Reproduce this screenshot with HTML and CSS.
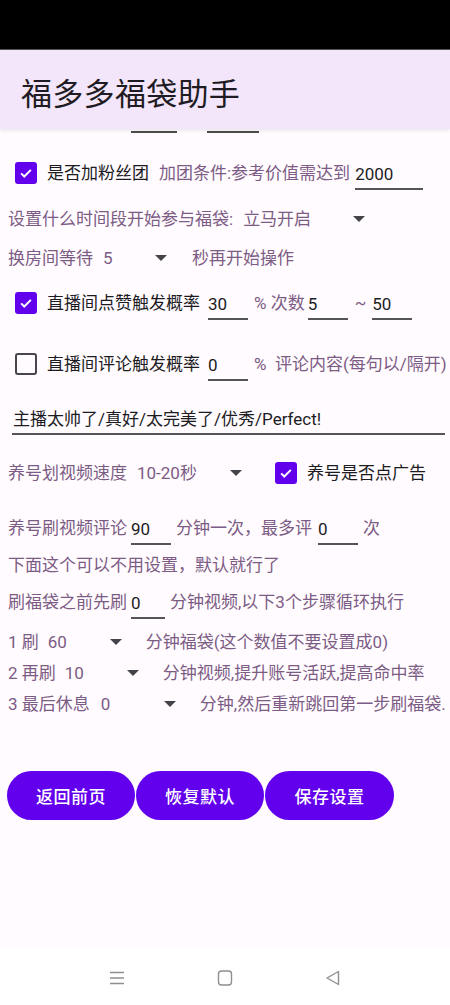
FILE: index.html
```html
<!DOCTYPE html>
<html lang="zh-CN">
<head>
    <meta charset="UTF-8">
    <meta name="viewport" content="width=device-width, initial-scale=1.0">
    <title>福多多福袋助手</title>
    <link rel="stylesheet" href="styles.css">
</head>
<body>
    <div class="status-bar"></div>

    <div class="app-bar">
        <h1 class="title">福多多福袋助手</h1>
    </div>

    <div class="content">
        <!-- 上面被滚动遮住的两个输入框 -->
        <div class="clip-row">
            <span class="clip-line first"></span>
            <span class="clip-line second"></span>
        </div>

        <div class="row r1 pad-check">
            <span class="check on"><svg viewBox="0 0 24 24"><path d="M5.5 12.5l4.2 4.2 8.8-8.8" /></svg></span>
            <span class="label dark">是否加粉丝团</span>
            <span class="label ml10">加团条件:参考价值需达到</span>
            <span class="field w68 ml5">2000</span>
        </div>

        <div class="row r2">
            <span class="label">设置什么时间段开始参与福袋:</span>
            <span class="spinner sp-time"><span>立马开启</span><i class="arrow"></i></span>
        </div>

        <div class="row r3">
            <span class="label">换房间等待</span>
            <span class="spinner sp-wait"><span>5</span><i class="arrow"></i></span>
            <span class="label ml25">秒再开始操作</span>
        </div>

        <div class="row r4 pad-check">
            <span class="check on"><svg viewBox="0 0 24 24"><path d="M5.5 12.5l4.2 4.2 8.8-8.8" /></svg></span>
            <span class="label dark">直播间点赞触发概率</span>
            <span class="field w40 ml8">30</span>
            <span class="label ml6">% 次数</span>
            <span class="field w40 ml3">5</span>
            <span class="label ml7">~</span>
            <span class="field w40 ml6">50</span>
        </div>

        <div class="row r5 pad-check">
            <span class="check"></span>
            <span class="label dark">直播间评论触发概率</span>
            <span class="field w40 ml8">0</span>
            <span class="label ml6 nowrap">%&nbsp;&nbsp;评论内容(每句以/隔开)</span>
        </div>

        <div class="row r6">
            <span class="field wide">主播太帅了/真好/太完美了/优秀/Perfect!</span>
        </div>

        <div class="row r7">
            <span class="label">养号划视频速度</span>
            <span class="spinner sp-speed"><span>10-20秒</span><i class="arrow"></i></span>
            <span class="check on ml33"><svg viewBox="0 0 24 24"><path d="M5.5 12.5l4.2 4.2 8.8-8.8" /></svg></span>
            <span class="label dark">养号是否点广告</span>
        </div>

        <div class="row r8">
            <span class="label">养号刷视频评论</span>
            <span class="field w40 ml4">90</span>
            <span class="label ml5">分钟一次，最多评</span>
            <span class="field w40 ml6">0</span>
            <span class="label ml5">次</span>
        </div>

        <div class="row r9">
            <span class="label">下面这个可以不用设置，默认就行了</span>
        </div>

        <div class="row r10">
            <span class="label">刷福袋之前先刷</span>
            <span class="field w34 ml4">0</span>
            <span class="label ml5">分钟视频,以下3个步骤循环执行</span>
        </div>

        <div class="row step r11">
            <span class="label">1 刷</span>
            <span class="spinner sp-s1"><span>60</span><i class="arrow"></i></span>
            <span class="label ml24">分钟福袋(这个数值不要设置成0)</span>
        </div>

        <div class="row step">
            <span class="label">2 再刷</span>
            <span class="spinner sp-s2"><span>10</span><i class="arrow"></i></span>
            <span class="label ml24">分钟视频,提升账号活跃,提高命中率</span>
        </div>

        <div class="row step">
            <span class="label">3 最后休息</span>
            <span class="spinner sp-s3"><span>0</span><i class="arrow"></i></span>
            <span class="label ml24 nowrap">分钟,然后重新跳回第一步刷福袋.</span>
        </div>

        <div class="buttons">
            <button class="btn b1">返回前页</button>
            <button class="btn b2">恢复默认</button>
            <button class="btn b3">保存设置</button>
        </div>
    </div>

    <div class="nav-bar">
        <svg class="nav-icon" viewBox="0 0 18 18"><path d="M2 3.5h14M2 9h14M2 14.5h14" /></svg>
        <svg class="nav-icon" viewBox="0 0 18 18"><rect x="2.5" y="2" width="13" height="14" rx="3" /></svg>
        <svg class="nav-icon" viewBox="0 0 18 18"><path d="M14.5 2.5v13L3 9z" stroke-linejoin="round" /></svg>
    </div>
</body>
</html>
```

FILE: styles.css
```css
body {
    margin: 0;
    padding: 0;
    width: 450px;
    height: 1005px;
    background-color: #ffffff;
    font-family: Roboto, "Noto Sans CJK SC", sans-serif;
    overflow: hidden;
}
.status-bar {
    height: 49px;
    background-color: #000;
    border-bottom: 1px solid #555;
}
.app-bar {
    height: 79px;
    background-color: #f3e6fb;
    display: flex;
    align-items: center;
    padding-left: 21px;
    position: relative;
    z-index: 1;
    box-shadow: 0 2px 3px rgba(0, 0, 0, 0.08);
}
.title {
    margin: 0;
    font-family: "Noto Sans CJK SC", sans-serif;
    font-weight: 400;
    font-size: 31px;
    color: #1f1b22;
    letter-spacing: 0.3px;
    padding-top: 3px;
}
.content {
    height: 821px;
    background-color: #fffbfe;
    display: flex;
    flex-direction: column;
}
.clip-row {
    height: 4px;
    display: flex;
    align-items: flex-start;
    padding-left: 131px;
}
.clip-line {
    display: block;
    height: 2px;
    margin-top: 2px;
    background-color: #4d4d4d;
}
.clip-line.first { width: 46px; }
.clip-line.second { width: 52px; margin-left: 30px; }

/* 每一行 */
.row {
    display: flex;
    align-items: center;
    height: 36px;
    padding-left: 8px;
    white-space: nowrap;
}
.pad-check { padding-left: 15px; }
.r1 { margin-top: 22px; }
.r2 { margin-top: 10px; }
.r3 { margin-top: 3px; }
.r4 { margin-top: 9px; }
.r5 { margin-top: 25px; }
.r6 { margin-top: 18px; padding-left: 12px; padding-right: 5px; }
.r7 { margin-top: 19px; }
.r8 { margin-top: 19px; }
.r9 { margin-top: 1px; }
.r10 { margin-top: 1px; }
.step { height: 31px; }
.r11 { margin-top: 6px; }

.label {
    font-size: 17px;
    line-height: 20px;
    color: #7c5b85;
}
.label.dark {
    color: #1c1b1f;
    margin-left: 10px;
}
.nowrap { white-space: nowrap; }

.ml3 { margin-left: 3px; }
.ml4 { margin-left: 4px; }
.ml5 { margin-left: 5px; }
.ml6 { margin-left: 6px; }
.ml7 { margin-left: 7px; }
.ml8 { margin-left: 8px; }
.ml10 { margin-left: 10px; }
.ml24 { margin-left: 24px; }
.ml25 { margin-left: 25px; }
.ml33 { margin-left: 33px; }

/* 复选框 */
.check {
    width: 22px;
    height: 22px;
    box-sizing: border-box;
    border: 2px solid #49454f;
    border-radius: 3px;
    flex-shrink: 0;
    display: flex;
    align-items: center;
    justify-content: center;
}
.check.on {
    background-color: #6200ee;
    border-color: #6200ee;
}
.check svg {
    width: 18px;
    height: 18px;
    fill: none;
    stroke: #fff;
    stroke-width: 2.6;
}

/* 输入框 */
.field {
    display: inline-block;
    box-sizing: border-box;
    font-size: 17px;
    line-height: 20px;
    color: #1c1b1f;
    padding: 4px 0 4px 0;
    border-bottom: 2px solid #555;
    margin-top: 4px;
}
.w34 { width: 34px; }
.w40 { width: 40px; }
.w68 { width: 68px; }
.wide {
    flex: 1;
    padding-left: 1px;
}

/* 下拉框 */
.spinner {
    display: flex;
    align-items: center;
    justify-content: space-between;
    font-size: 17px;
    line-height: 20px;
    color: #7c5b85;
    margin-left: 10px;
}
.sp-time { width: 122px; }
.sp-wait { width: 64px; }
.sp-speed { width: 105px; }
.sp-s1 { width: 74px; margin-left: 9px; }
.sp-s2 { width: 74px; margin-left: 9px; }
.sp-s3 { width: 75px; margin-left: 11px; }
.arrow {
    width: 0;
    height: 0;
    border-left: 6px solid transparent;
    border-right: 6px solid transparent;
    border-top: 6px solid #45434a;
}

/* 按钮 */
.buttons {
    display: flex;
    gap: 1px;
    margin-top: 52px;
    padding-left: 7px;
}
.btn {
    height: 49px;
    border: none;
    border-radius: 25px;
    background-color: #6200ee;
    color: #fff;
    font-family: "Noto Sans CJK SC", sans-serif;
    font-size: 17px;
    font-weight: 500;
    letter-spacing: 0.5px;
    cursor: pointer;
}
.b1 { width: 128px; }
.b2 { width: 128px; }
.b3 { width: 129px; }

/* 底部导航 */
.nav-bar {
    height: 55px;
    background-color: #fff;
    display: flex;
    justify-content: center;
    align-items: center;
    gap: 90px;
}
.nav-icon {
    width: 18px;
    height: 18px;
    fill: none;
    stroke: #8f8f8f;
    stroke-width: 1.4;
}
```
